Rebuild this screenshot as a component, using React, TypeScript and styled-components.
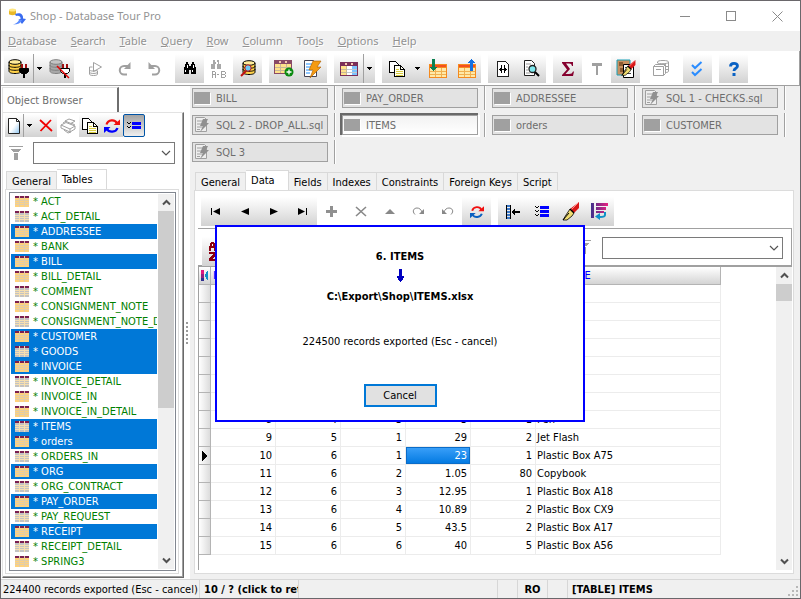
import React from 'react';
import styled, { createGlobalStyle, css } from 'styled-components';

const GlobalStyle = createGlobalStyle`
  *, *::before, *::after { box-sizing: border-box; }
  body { margin: 0; background: #f0f0f0; }
  body, button, input, select, table {
    font-family: "DejaVu Sans Condensed", "Noto Sans", sans-serif;
    font-size: 11px;
    line-height: 15px;
  }
  button { margin: 0; padding: 0; border: 0; background: none; color: inherit; }
  svg { display: block; flex: none; }
`;

/* ---------- window frame ---------- */

const Window = styled.div`
  position: relative;
  display: flex;
  flex-direction: column;
  height: 100vh;
  overflow: hidden;
  border: 1px solid #6a676b;
  background: #f0f0f0;
  color: #000;
`;

const TitleBar = styled.header`
  display: flex;
  align-items: center;
  height: 30px;
  flex: none;
  background: #fff;
  color: #949494;
  padding-left: 8px;
`;

const Title = styled.h1`
  flex: 1;
  margin: 0 0 0 4px;
  font: 400 11px/16px "Noto Sans", "Open Sans", sans-serif;
`;

const WindowButton = styled.button`
  display: grid;
  place-items: center;
  width: 46px;
  height: 28px;
  color: #8a8a8a;
`;

const MenuBar = styled.nav`
  display: flex;
  align-items: center;
  gap: 14px;
  height: 20px;
  flex: none;
  padding-left: 7px;
`;

const MenuItem = styled.button`
  font: 11px/18px "Noto Sans", "Open Sans", sans-serif;
  color: #929292;
  text-shadow: 1px 1px 0 #fff;
`;

const ToolBar = styled.div`
  display: flex;
  gap: 7px;
  height: 35px;
  flex: none;
  padding: 3px 0 0 3px;
  background: #fff;
  border-bottom: 1px solid #a0a0a0;
  border-right: 1px solid #a0a0a0;
`;

const ToolGroup = styled.div`
  display: flex;
  flex: none;
`;

const raised = css`
  background: linear-gradient(#fff, #f2f2f2 30%, #d2d2d2);
`;

const ToolButton = styled.button<{ $flat?: boolean }>`
  display: grid;
  place-items: center;
  width: 29px;
  height: 29px;
  ${p => !p.$flat && raised}
`;

const DropButton = styled.button<{ $line?: boolean }>`
  display: grid;
  place-items: center;
  width: 12px;
  height: 29px;
  border-left: 1px solid ${p => (p.$line ? '#a0a0a0' : 'transparent')};
  ${raised}
`;

const Body = styled.div`
  display: flex;
  flex: 1;
  min-height: 0;
`;

/* ---------- object browser ---------- */

const Side = styled.aside`
  display: flex;
  flex-direction: column;
  width: 183px;
  flex: none;
  padding: 1px 0 1px 1px;
  background: #fff;
`;

const SideCaption = styled.h2`
  margin: 0;
  width: 117px;
  height: 25px;
  padding: 5px 0 0 4px;
  border: 1px solid #e3e3e3;
  border-right: 2px solid #6e6e6e;
  border-bottom: 0;
  font-size: 11px;
  font-weight: 400;
  color: #6d6d6d;
`;

const SidePanel = styled.div`
  display: flex;
  flex-direction: column;
  flex: 1;
  min-height: 0;
  padding: 1px 4px 3px 2px;
  border: 1px solid #e3e3e3;
  border-right-color: #696969;
  border-bottom-color: #696969;
  box-shadow: inset -1px -1px 0 #a0a0a0;
`;

const SideTools = styled.div`
  display: flex;
  height: 23px;
  flex: none;
`;

const SideTool = styled.button<{ $flat?: boolean; $narrow?: boolean; $active?: boolean }>`
  display: grid;
  place-items: center;
  width: ${p => (p.$narrow ? 18 : 22)}px;
  height: 23px;
  ${p => !p.$flat && raised}
  ${p =>
    p.$active &&
    css`
      background: linear-gradient(#a3a3a3, #efefef);
      border: 1px solid #0054a6;
      border-radius: 2px;
    `}
`;

const SideDrop = styled.button`
  display: grid;
  place-items: center;
  width: 12px;
  height: 23px;
  border-left: 1px solid #a0a0a0;
  ${raised}
`;

const SideFilter = styled.div`
  display: flex;
  align-items: center;
  gap: 10px;
  padding: 5px 4px;
`;

const ComboFrame = styled.div<{ $wide?: boolean }>`
  display: grid;
  align-items: center;
  height: 22px;
  ${p => (p.$wide ? 'width: 181px;' : 'flex: 1;')}
  > * { grid-area: 1 / 1; }
  > svg { justify-self: end; margin-right: 4px; pointer-events: none; }
`;

const Combo = styled.select`
  appearance: none;
  width: 100%;
  height: 22px;
  border: 1px solid #7a7a7a;
  border-radius: 0;
  background: #fff;
`;

const TabStrip = styled.div`
  display: flex;
  align-items: flex-end;
  flex: none;
  padding-left: 1px;
`;

const Tab = styled.button<{ $active?: boolean }>`
  height: ${p => (p.$active ? 21 : 18)}px;
  padding: ${p => (p.$active ? '0 13px 2px 5px' : '1px 5px 0')};
  margin-bottom: ${p => (p.$active ? -1 : 0)}px;
  border: 1px solid #d9d9d9;
  border-bottom: 0;
  background: ${p => (p.$active ? '#fff' : '#f0f0f0')};
  white-space: nowrap;
  & + & { border-left: 0; }
`;

const SidePage = styled.div`
  display: flex;
  flex: 1;
  min-height: 0;
  padding: 2px 2px 2px 3px;
  border: 1px solid #dcdcdc;
`;

const ListFrame = styled.div`
  display: flex;
  flex: 1;
  min-width: 0;
  padding: 1px;
  border: 1px solid #828790;
`;

const TableList = styled.ul`
  flex: 1;
  min-width: 0;
  margin: 0;
  padding: 0;
  list-style: none;
  overflow: hidden;
`;

const TableItem = styled.li<{ $selected?: boolean }>`
  display: flex;
  align-items: center;
  height: 15px;
  padding-left: 4px;
  white-space: nowrap;
  color: ${p => (p.$selected ? '#fff' : '#008000')};
  background: ${p => (p.$selected ? '#0078d7' : 'transparent')};
  > span { margin-left: 4px; }
`;

const ScrollTrack = styled.div`
  display: flex;
  flex-direction: column;
  width: 16px;
  flex: none;
  margin-left: 1px;
  background: #f0f0f0;
`;

const ScrollArrow = styled.button`
  display: grid;
  place-items: center;
  height: 17px;
  flex: none;
`;

const ScrollThumb = styled.div<{ $long?: boolean }>`
  ${p => (p.$long ? 'flex: 198;' : 'height: 17px;')}
  background: #cdcdcd;
`;

const ScrollRest = styled.div`
  flex: 144;
`;

const Splitter = styled.div`
  display: flex;
  flex-direction: column;
  align-items: center;
  justify-content: center;
  gap: 2px;
  width: 6px;
  flex: none;
  background: #fff;
`;

const Grip = styled.i`
  width: 2px;
  height: 2px;
  background: #9a9a9a;
`;

/* ---------- documents ---------- */

const Main = styled.main`
  display: flex;
  flex-direction: column;
  flex: 1;
  min-width: 0;
`;

const DocTabs = styled.div`
  display: flex;
  flex-wrap: wrap;
  padding-left: 2px;
`;

const DocSlot = styled.div`
  display: flex;
  width: 150px;
  height: 27px;
  &::after {
    content: '';
    width: 2px;
    height: 24px;
    margin-left: 6px;
    border-left: 1px solid #a0a0a0;
    border-right: 1px solid #fff;
  }
`;

const DocTab = styled.button<{ $active?: boolean }>`
  display: flex;
  align-items: center;
  gap: 3px;
  width: 136px;
  height: 20px;
  margin-top: 2px;
  padding-left: 1px;
  border: 1px solid #a0a0a0;
  background: #e3e3e3;
  color: #6d6d6d;
  white-space: nowrap;
  ${p =>
    p.$active &&
    css`
      background: linear-gradient(#f2f2f2, #fff);
      box-shadow: -1px -1px 0 1px #696969, 1px 1px 0 1px #fff;
    `}
`;

const SheetMark = styled.span`
  width: 19px;
`;

const DocArea = styled.section`
  display: flex;
  flex-direction: column;
  flex: 1;
  min-height: 0;
  padding: 3px 6px 5px 4px;
`;

const DocPage = styled.div`
  display: flex;
  flex-direction: column;
  flex: 1;
  min-height: 0;
  padding: 6px 1px 3px 3px;
  background: #fff;
  border: 1px solid #dcdcdc;
`;

const NavBar = styled.div`
  display: flex;
  gap: 7px;
  height: 32px;
  flex: none;
  padding-left: 3px;
  border-bottom: 1px solid #a0a0a0;
`;

const FilterBar = styled.div`
  display: flex;
  align-items: flex-start;
  gap: 11px;
  height: 38px;
  flex: none;
  padding: 8px 8px 0 4px;
  border-bottom: 2px solid #a0a0a0;
  border-right: 1px solid #a0a0a0;
`;

const FilterIconBox = styled.span`
  margin: 3px 0 0 auto;
`;

const GridFrame = styled.div`
  display: flex;
  justify-content: space-between;
  flex: 1;
  min-height: 0;
  border-left: 1px solid #a0a0a0;
`;

const Grid = styled.table`
  table-layout: fixed;
  width: 522px;
  height: max-content;
  border-collapse: separate;
  border-spacing: 0;
`;

const Col = styled.col<{ $w: number }>`
  width: ${p => p.$w}px;
`;

const HeadCell = styled.th`
  height: 18px;
  padding: 0 2px;
  border-right: 1px solid #b4b4b4;
  border-bottom: 1px solid #b4b4b4;
  background: linear-gradient(#fff, #d4d4d4);
  color: #0000ff;
  font-weight: 400;
  text-align: left;
`;

const RowMark = styled.td`
  height: 18px;
  padding: 0 0 0 3px;
  border-right: 1px solid #b4b4b4;
  border-bottom: 1px solid #b4b4b4;
  background: linear-gradient(90deg, #fff, #dcdcdc);
`;

const Cell = styled.td<{ $num?: boolean; $selected?: boolean }>`
  height: 18px;
  padding: 0 ${p => (p.$num ? 3 : 0)}px 0 1px;
  border-right: 1px solid #ececec;
  border-bottom: 1px solid #ececec;
  text-align: ${p => (p.$num ? 'right' : 'left')};
  white-space: nowrap;
  ${p =>
    p.$selected &&
    css`
      background: linear-gradient(#3ca1fa, #0078e0);
      background-clip: padding-box;
      box-shadow: inset 0 0 0 1px #0a6cc8;
      color: #fff;
    `}
`;

/* ---------- export progress ---------- */

const Overlay = styled.div`
  position: absolute;
  inset: 0;
  display: grid;
  place-items: center;
  padding: 48px 1px 0 0;
`;

const ProgressDialog = styled.div`
  display: flex;
  flex-direction: column;
  align-items: center;
  width: 370px;
  height: 197px;
  padding-top: 22px;
  background: #fff;
  border: 2px solid #0000ff;
  > svg { margin: 4px 0 7px; }
`;

const ProgressTitle = styled.strong`
  line-height: 16px;
`;

const ProgressText = styled.p`
  margin: 29px 0 34px;
  line-height: 16px;
`;

const CancelButton = styled.button`
  width: 73px;
  height: 23px;
  border: 2px solid #0078d7;
  background: #e1e1e1;
`;

/* ---------- status bar ---------- */

const StatusBar = styled.footer`
  display: flex;
  align-items: stretch;
  height: 19px;
  flex: none;
  border-top: 1px solid #d7d7d7;
`;

const StatusCell = styled.div<{ $w?: number; $bold?: boolean; $center?: boolean }>`
  ${p => (p.$w ? `width: ${p.$w}px; flex: none;` : 'flex: 1;')}
  overflow: hidden;
  padding: 2px 0 0 ${p => (p.$center ? 0 : p.$bold ? 4 : 2)}px;
  border-right: 1px solid #d7d7d7;
  font-weight: ${p => (p.$bold ? 700 : 400)};
  text-align: ${p => (p.$center ? 'center' : 'left')};
  white-space: nowrap;
`;

const StatusLast = styled.div`
  display: flex;
  align-items: flex-end;
  justify-content: space-between;
  width: 232px;
  flex: none;
  padding: 0 1px 1px 4px;
  font-weight: 700;
`;

/* ---------- icons ---------- */

type IcoProps = { w?: number; h?: number; soft?: boolean; children: React.ReactNode };
const Ico = ({ w = 20, h = 20, soft, children }: IcoProps) => (
  <svg width={w} height={h} viewBox={`0 0 ${w} ${h}`} fill="none" shapeRendering={soft ? 'auto' : 'crispEdges'} aria-hidden="true">
    {children}
  </svg>
);

const Arrow = () => <Ico w={5} h={3}><path d="M0 0h5v1H0zM1 1h3v1H1zM2 2h1v1H2z" fill="#000" /></Ico>;

const Chevron = () => <Ico w={10} h={6} soft><path d="M1 1l4 4 4-4" stroke="#555" strokeWidth="1.2" /></Ico>;

const ScrollChevron = ({ up }: { up?: boolean }) => (
  <Ico w={9} h={7} soft><path d={up ? 'M1 5.500l3.500-3.500 3.500 3.500' : 'M1 1.500l3.500 3.500 3.500-3.500'} stroke="#505050" strokeWidth="2" /></Ico>
);

const Cylinder = ({ gray }: { gray?: boolean }) => {
  const edge = gray ? '#808080' : '#000';
  const fill = gray ? '#a8a8a8' : '#ffd24a';
  return (
    <>
      <path d="M1 3v9c0 1.500 2 2.500 6 2.500s6-1 6-2.500V3z" fill={fill} />
      <ellipse cx="7" cy="3" rx="6" ry="2.300" fill={gray ? '#c4c4c4' : '#ffec9a'} stroke={edge} />
      <path d="M1 3v9c0 1.500 2 2.500 6 2.500s6-1 6-2.500V3M1 6c0 1.500 2 2.300 6 2.300s6-.8 6-2.300M1 9c0 1.500 2 2.300 6 2.300s6-.8 6-2.300" stroke={edge} />
    </>
  );
};

const Plug = ({ open }: { open?: boolean }) => (
  <>
    <path d="M13 5h2v5h-2zM17 5h2v5h-2z" fill="#a01010" />
    <path d="M11.500 9.500h9v3l-2 2h-5l-2-2z" fill={open ? '#fff' : '#000'} stroke="#000" />
    <path d="M15 15h2v4h-2z" fill="#000" />
  </>
);

const DbConnect = () => <Ico w={22} h={20} soft><Cylinder /><Plug /></Ico>;
const DbDisconnect = () => <Ico w={22} h={20} soft><Cylinder gray /><Plug open /><path d="M8 7l12 12" stroke="#e00000" strokeWidth="1.500" /></Ico>;

const RunStack = () => (
  <Ico w={16} h={16} soft>
    <g stroke="#a0a0a0">
      <path d="M5.500 1.500v9l8-4.500z" fill="#fff" />
      <path d="M1.500 6v7c0 1 1.500 1.500 4 1.500s4-.5 4-1.500v-3M1.500 6h3M1.500 9c1 1 3 1.500 8 .5M1.500 11.500c1 1 5 1.500 8 .2" />
    </g>
  </Ico>
);

const RedoGray = () => <Ico w={14} h={14} soft><path d="M9 12.500H6a4 4 0 010-8.500H10" stroke="#a0a0a0" strokeWidth="2" /><path d="M12.500 0v7H6z" fill="#a0a0a0" /></Ico>;
const UndoGray = () => <Ico w={14} h={14} soft><path d="M5 12.500h3a4 4 0 000-8.500H4" stroke="#a0a0a0" strokeWidth="2" /><path d="M1.500 0v7H8z" fill="#a0a0a0" /></Ico>;

const Find = () => (
  <Ico w={14} h={13}>
    <path d="M3 0h2v2h1v2h2V2h1V0h2v2h1v3h1v7H8V8H6v4H1V5h1V2h1z" fill="#000" />
    <path d="M4 3h1v3H4zM10 3h1v3h-1zM2 8h1v2H2zM9 8h1v2H9z" fill="#fff" />
  </Ico>
);

const Replace = () => (
  <Ico w={16} h={18}>
    <path d="M2 0h2v2h1v2H4v5H0V4h2zM6 0h2v4h2v5H6V4h1V2H6z" fill="#a8a8a8" />
    <path d="M1.500 12v6M1 11.500h3M4.500 12v6M1 14.500h3M6 14.500h2M10.500 11v7M10 11.500h4M10 14.500h4M10 17.500h4M14.500 12v2M14.500 15v2" stroke="#a0a0a0" />
  </Ico>
);

const DbSearch = () => (
  <Ico w={16} h={17} soft>
    <g transform="translate(2 0)"><Cylinder /></g>
    <path d="M6 11l-5 5" stroke="#c01010" strokeWidth="2" />
    <circle cx="8" cy="8" r="3.200" fill="#6cc8f4" stroke="#c01010" />
  </Ico>
);

const SheetGrid = ({ head, body, line, w = 18 }: { head: string; body: string; line: string; w?: number }) => (
  <>
    <path d={`M0 0h${w}v14H0z`} fill={head} />
    <path d={`M1 4h${w - 2}v9H1z`} fill={body} />
    <path d={`M1 7h${w - 2}v1H1zM1 10h${w - 2}v1H1zM6 4h1v9H6zM12 4h1v9h-1z`} fill={line} />
    <path d="M5 1h2v2H5zM11 1h2v2h-2z" fill="#f6c8ae" />
  </>
);

const AddTable = () => (
  <Ico w={20} h={17} soft>
    <SheetGrid head="#8a4a66" body="#ffe28a" line="#c8b898" />
    <circle cx="15" cy="12" r="4.500" fill="#0a8a10" />
    <path d="M15 9.500v5M12.500 12h5" stroke="#fff" strokeWidth="1.300" />
  </Ico>
);

const ScriptRun = () => (
  <Ico w={19} h={20} soft>
    <path d="M1.500 1.500h9l3 3v13h-12z" fill="#fff" stroke="#445" />
    <path d="M3 5h6M3 8h6M3 11h6M3 14h4" stroke="#1e90ff" />
    <path d="M10 2h8l-4 6h4L7 19l3-8H6z" fill="#f49a10" stroke="#a85c00" strokeWidth=".6" />
  </Ico>
);

const TableView = () => (
  <Ico w={18} h={14}>
    <SheetGrid head="#7a2e58" body="#ffe28a" line="#c8b898" />
    <path d="M7 4h5v9H7z" fill="#fff" /><path d="M12 4h5v9h-5z" fill="#7cc4ff" />
    <path d="M7 7h10v1H7zM7 10h10v1H7z" fill="#c0c8d0" />
  </Ico>
);

const CopyPages = () => (
  <Ico w={16} h={16}>
    <path d="M.5.5h6l3 3v8h-9z" fill="#fff" stroke="#000" />
    <path d="M5.500 4.500h6l4 4v7h-10z" fill="#fffff0" stroke="#000" />
    <path d="M11.500 4.500v4h4" stroke="#000" />
    <path d="M7 8h3v1H7zM7 10h7v1H7zM7 12h7v1H7zM7 14h7v1H7z" fill="#d8cc40" />
  </Ico>
);

const ImportTable = ({ out }: { out?: boolean }) => (
  <Ico w={20} h={20}>
    <g transform="translate(1 5)"><SheetGrid head="#f58a1e" body="#ffe9a8" line="#f0b050" /></g>
    <path d="M2 6h16v2H2z" fill="#f4501e" />
    {out ? <path d="M14 0h1v1h1v1h1v1h1v1h-2v8h-3V4h-2V3h1V2h1V1h1z" fill="#1470e0" /> : <path d="M4 0h3v8h2v1H8v1H7v1H6v1H5v-1H4v-1H3V9H2V8h2z" fill="#0a8050" />}
  </Ico>
);

const PageWidth = () => (
  <Ico w={14} h={16}>
    <path d="M1.500.5h8l3 3v12h-11z" fill="#fff" stroke="#222" />
    <path d="M3 8h8v1H3zM5 4h1v8H5zM8 4h1v8H8zM4 7h1v3H4zM9 7h1v3H9z" fill="#000" />
  </Ico>
);

const PageFind = () => (
  <Ico w={18} h={17} soft>
    <path d="M1.500.5h7l3 3v12h-10z" fill="#fff" stroke="#222" />
    <path d="M3 4h5M3 7h2M3 10h2M3 13h4" stroke="#999" />
    <circle cx="9.500" cy="9" r="3.500" fill="#7fe8ee" stroke="#222" strokeWidth="1.300" />
    <path d="M12 12l4 4" stroke="#000" strokeWidth="2" />
  </Ico>
);

const Sigma = () => <Ico w={12} h={14} soft><path d="M0 0h11v4h-1C9.600 2.300 9 1.500 7 1.500H4L8 7l-4.500 5H7c2.500 0 3.200-.8 4-2.500h1L11 14H0v-1l5-5.500L0 1z" fill="#85002e" /></Ico>;
const BigT = () => <Ico w={10} h={12}><path d="M0 0h10v3H6v9H4V3H0z" fill="#a0a0a0" /></Ico>;

const Brush = () => (
  <>
    <path d="M17 0v6l-5 5-4-4z" fill="#d81818" /><path d="M16 1l-7 7" stroke="#ff8a8a" />
    <path d="M8 7l4 4-2 3-5 4H1l3-5z" fill="#f0dc70" stroke="#000" strokeWidth=".8" />
    <path d="M1 18l6-7" stroke="#000" /><path d="M8 7l4 4" stroke="#000" strokeWidth="1.500" />
  </>
);

const PicturePen = () => (
  <Ico w={20} h={20} soft>
    <path d="M1 1h13v15H1z" fill="#c89060" stroke="#18a0b8" />
    <path d="M3 3h4v4H3zM4 9h3v4H4z" fill="#8a5a30" />
    <path d="M7.500 5.500h10v13h-10z" fill="#fff" stroke="#000" />
    <path d="M9 8.500h6M9 11.500h4M9 14.500h6" stroke="#444" />
    <g transform="translate(5 1) scale(.85)"><Brush /></g>
  </Ico>
);

const DbGray = () => (
  <Ico w={17} h={17} soft>
    <g stroke="#a0a0a0">
      <path d="M4.500 3v-1c0-1 2-1.500 5.500-1.500s5.500.5 5.500 1.500v9c0 1-1 1.500-3 1.500M4.500 3c1 1 10 1 11-.5M13 6.500h2.500M13 9.500h2.500" />
      <path d="M.5 6.500l2-2h10v9l-2 2H.5zM.5 6.500h10v9M10.500 6.500l2-2M3 9.500h5" />
    </g>
  </Ico>
);

const Checks = () => <Ico w={13} h={16} soft><path d="M1 4l3 3 6.500-6M1 11l3 3 6.500-6" stroke="#2a8cff" strokeWidth="2" /></Ico>;
const Help = () => <Ico w={10} h={14} soft><path d="M1.500 4.500c0-4 7-4 7-.5 0 2.500-3.500 2-3.500 5" stroke="#0a62c4" strokeWidth="2.800" /><path d="M3.500 11h3v3h-3z" fill="#0a62c4" /></Ico>;

const NewPage = () => (
  <Ico w={12} h={16} soft>
    <defs><linearGradient id="page" x1="0" y1="0" x2="1" y2="1"><stop offset=".5" stopColor="#fff" /><stop offset="1" stopColor="#8cc4f0" /></linearGradient></defs>
    <path d="M.5.500h8l3 3v12h-11z" fill="url(#page)" stroke="#222" /><path d="M8.500.5v3h3" stroke="#222" />
  </Ico>
);
const RedCross = () => <Ico w={14} h={13} soft><path d="M1 1l12 11M12 1L1.500 12" stroke="#f00000" strokeWidth="1.800" /></Ico>;
const Printer = () => (
  <Ico w={17} h={16} soft>
    <g stroke="#a0a0a0" fill="#fff">
      <path d="M5 3l4-2 6 2-4 2.500zM1 7l5-2.500L15 8l-5 3zM1 7v3l9 4v-3M10 14l5-3V8" /><path d="M3 5l3-2M11 5l4 2M4 12l4 3 3-1" fill="none" />
    </g>
  </Ico>
);
const Refresh = ({ w = 16, blue = '#0000ff' }: { w?: number; blue?: string }) => (
  <svg width={w} height={w} viewBox="0 0 16 16" fill="none" aria-hidden="true">
    <path d="M2.500 6.500c1.500-5 8.500-5.500 10.500-1" stroke="#f01010" strokeWidth="2.200" /><path d="M9.500 5.500H16V0z" fill="#f01010" transform="translate(0 1.500)" />
    <path d="M13.500 10c-1.500 4.500-8.500 5-10.500 1" stroke={blue} strokeWidth="2.200" /><path d="M0 9h6.500L0 15z" fill={blue} />
  </svg>
);
const CheckList = ({ rows = 2 }: { rows?: number }) => (
  <Ico w={14} h={rows * 4}>
    {Array.from({ length: rows }, (_, i) => (
      <g key={i} transform={`translate(0 ${i * 4})`}>
        <path d="M0 0h1v1H0zM1 1h2v1H1zM3 0h1v1H3z" fill="#000" /><path d="M5 0h9v3H5z" fill="#0000ff" />
      </g>
    ))}
  </Ico>
);

const Funnel = () => <Ico w={14} h={14}><path d="M0 0h14v1H0zM2 3h10v1h-1v1h-1v1H4V5H3V4H2zM5 7h4v7H5z" fill="#a0a0a0" /></Ico>;

const TableIcon = ({ pale }: { pale?: boolean }) => (
  <Ico w={14} h={11}>
    <path d="M0 2h14v9H0z" fill={pale ? '#c3c3c3' : '#ffd27c'} />
    <path d="M0 4h14v1H0zM0 6h14v1H0zM0 8h14v1H0zM4 0h1v11H4zM9 0h1v11H9z" fill={pale ? '#f6dfb0' : '#e0cdaa'} />
    <path d="M0 0h4v2H0zM5 0h4v2H5zM10 0h4v2h-4z" fill="#7b1f50" />
  </Ico>
);

const SqlGray = () => (
  <Ico w={15} h={16} soft>
    <path d="M1.500.5h9l2 2v12h-11z" fill="#eee" stroke="#a0a0a0" />
    <path d="M3 4h6M3 7h5M3 10h6M3 12.500h3" stroke="#a0a0a0" />
    <path d="M9 2h5l-2 4h3L6 15l3-6H6z" fill="#909090" />
  </Ico>
);
const BlockGray = () => <Ico w={17} h={13}><path d="M1 1h16v12H1z" fill="#fff" /><path d="M0 0h16v12H0z" fill="#a0a0a0" /></Ico>;

const navPaths: Record<string, string> = {
  first: 'M0 0h1v7H0zM9 0v7L2 3.500z',
  prior: 'M9 0v7L1 3.500z',
  next: 'M1 0v7l8-3.500z',
  last: 'M0 0v7l7-3.500zM8 0h1v7H8z',
};

const NavIcon = ({ name }: { name: string }) => <Ico w={10} h={7} soft><path d={navPaths[name]} fill="#000" /></Ico>;
const Plus = () => <Ico w={11} h={11}><path d="M4 0h3v4h4v3H7v4H4V7H0V4h4z" fill="#909090" /></Ico>;
const GrayCross = () => <Ico w={12} h={11} soft><path d="M1 1l10 9M11 1L1 10" stroke="#888" strokeWidth="1.600" /></Ico>;
const GrayUp = () => <Ico w={10} h={5} soft><path d="M5 0l5 5H0z" fill="#888" /></Ico>;
const Curl = ({ left }: { left?: boolean }) => (
  <Ico w={13} h={9} soft>
    <g transform={left ? 'translate(13 0) scale(-1 1)' : undefined}><path d="M3 7.500C-.5 4 2 1 5 1c2.500 0 4 1.500 5 4" stroke="#888" /><path d="M12 2v5H7z" fill="#888" /></g>
  </Ico>
);
const FitLeft = () => (
  <Ico w={14} h={14}>
    <path d="M0 0h1v14H0zM4 0h1v14H4z" fill="#000" />
    <path d="M2.500 0v14" stroke="#3a78c8" strokeWidth="3" strokeDasharray="2 1" />
    <path d="M5 7l4-4v3h5v2H9v3z" fill="#000" />
  </Ico>
);
const SortRows = () => (
  <Ico w={17} h={17} soft>
    <defs><linearGradient id="bars"><stop offset="0" stopColor="#40308c" /><stop offset="1" stopColor="#e82080" /></linearGradient></defs>
    <path d="M0 0h3v15H0zM5 0h12v3H5zM5 4h10v3H5zM5 8h8v2H5z" fill="url(#bars)" />
    <path d="M14 9v3c0 2-3 2-5 2" stroke="#1090c8" strokeWidth="2" /><path d="M9 10v7l-5-3.500z" fill="#1090c8" />
  </Ico>
);
const SortAZ = () => (
  <Ico w={15} h={19}>
    <path d="M2 0h3v1h1v2h1v6H5V6H2v3H0V4h1V1h1zM3 2v2h1V2zM0 10h8v3H7v1H6v1H5v1H4v1h4v2H0v-3h1v-1h1v-1h1v-1h1v-1H0z" fill="#8c0010" />
    <path d="M11 2h2v12h2l-3 4-3-4h2z" fill="#000080" />
  </Ico>
);
const PinColumn = () => (
  <Ico w={8} h={11}>
    <path d="M0 0h3v4H0z" fill="#e01880" /><path d="M0 4h3v4H0z" fill="#902080" /><path d="M0 8h3v3H0z" fill="#303090" />
    <path d="M7 1v9H6V9H5V7H4V4h1V2h1V1z" fill="#1090c8" />
  </Ico>
);
const RowPointer = () => <Ico w={6} h={10}><path d="M0 0v10l6-5z" fill="#000" /></Ico>;
const DownArrow = () => <Ico w={7} h={13}><path d="M2 0h3v7h2v2H6v2H5v1H4v1H3v-1H2v-1H1V9H0V7h2z" fill="#0000c0" /></Ico>;

const AppLogo = () => (
  <Ico w={17} h={17} soft>
    <path d="M0 2v4c0 1.500 7 1.500 7 0V2z" fill="#e8b828" /><ellipse cx="3.500" cy="2" rx="3.500" ry="1.500" fill="#ffe680" />
    <path d="M6 6c5-2 8.500 0 8 4.500L17 11l-4 5-3.500-4.500 2-.5C12 8.500 10 7 7 8z" fill="#3a6cf0" />
    <path d="M13 12c-1 3-4 4.500-9 4.500 3-1 5-2 6-4.500z" fill="#5a8cff" />
  </Ico>
);

const SizeGrip = () => <Ico w={11} h={11}><path d="M8 0h2v2H8zM8 4h2v2H8zM4 4h2v2H4zM8 8h2v2H8zM4 8h2v2H4zM0 8h2v2H0z" fill="#b8b8b8" /></Ico>;

/* ---------- data ---------- */

const menus: [string, string, string][] = [
  ['', 'D', 'atabase'], ['', 'S', 'earch'], ['', 'T', 'able'], ['', 'Q', 'uery'], ['', 'R', 'ow'],
  ['', 'C', 'olumn'], ['Too', 'l', 's'], ['', 'O', 'ptions'], ['', 'H', 'elp'],
];

const tables: { name: string; selected?: boolean; pale?: boolean }[] = [
  { name: 'ACT' }, { name: 'ACT_DETAIL', pale: true }, { name: 'ADDRESSEE', selected: true }, { name: 'BANK' },
  { name: 'BILL', selected: true }, { name: 'BILL_DETAIL' }, { name: 'COMMENT', pale: true }, { name: 'CONSIGNMENT_NOTE' },
  { name: 'CONSIGNMENT_NOTE_DETAIL', pale: true }, { name: 'CUSTOMER', selected: true }, { name: 'GOODS', selected: true, pale: true },
  { name: 'INVOICE', selected: true }, { name: 'INVOICE_DETAIL', pale: true }, { name: 'INVOICE_IN' }, { name: 'INVOICE_IN_DETAIL' },
  { name: 'ITEMS', selected: true, pale: true }, { name: 'orders', selected: true }, { name: 'ORDERS_IN', pale: true },
  { name: 'ORG', selected: true }, { name: 'ORG_CONTRACT', pale: true }, { name: 'PAY_ORDER', selected: true },
  { name: 'PAY_REQUEST', pale: true }, { name: 'RECEIPT', selected: true }, { name: 'RECEIPT_DETAIL', pale: true }, { name: 'SPRING3' },
];

const docs: { name: string; sql?: boolean; active?: boolean }[] = [
  { name: 'BILL' }, { name: 'PAY_ORDER' }, { name: 'ADDRESSEE' }, { name: 'SQL 1 - CHECKS.sql', sql: true },
  { name: 'SQL 2 - DROP_ALL.sql', sql: true }, { name: 'ITEMS', active: true }, { name: 'orders' }, { name: 'CUSTOMER' },
  { name: 'SQL 3', sql: true },
];

const docPages = ['General', 'Data', 'Fields', 'Indexes', 'Constraints', 'Foreign Keys', 'Script'];

const rows: string[][] = [
  ...Array.from({ length: 7 }, () => ['', '', '', '', '', '']),
  ['8', '4', '3', '3', '1', 'Pen'],
  ['9', '5', '1', '29', '2', 'Jet Flash'],
  ['10', '6', '1', '23', '1', 'Plastic Box A75'],
  ['11', '6', '2', '1.05', '80', 'Copybook'],
  ['12', '6', '3', '12.95', '1', 'Plastic Box A18'],
  ['13', '6', '4', '10.89', '2', 'Plastic Box CX9'],
  ['14', '6', '5', '43.5', '2', 'Plastic Box A17'],
  ['15', '6', '6', '40', '5', 'Plastic Box A56'],
];

/* ---------- parts ---------- */

const MainTools = () => (
  <ToolBar role="toolbar" aria-label="Main">
    <ToolGroup>
      <ToolButton aria-label="Connect"><DbConnect /></ToolButton>
      <DropButton $line aria-label="Recent connections"><Arrow /></DropButton>
      <ToolButton aria-label="Disconnect"><DbDisconnect /></ToolButton>
    </ToolGroup>
    <ToolGroup>
      <ToolButton $flat aria-label="Run"><RunStack /></ToolButton>
      <ToolButton $flat aria-label="Redo"><RedoGray /></ToolButton>
      <ToolButton $flat aria-label="Undo"><UndoGray /></ToolButton>
    </ToolGroup>
    <ToolGroup>
      <ToolButton aria-label="Find"><Find /></ToolButton>
      <ToolButton $flat aria-label="Replace"><Replace /></ToolButton>
      <ToolButton aria-label="Search database"><DbSearch /></ToolButton>
    </ToolGroup>
    <ToolGroup>
      <ToolButton aria-label="New table"><AddTable /></ToolButton>
      <ToolButton aria-label="Run script"><ScriptRun /></ToolButton>
    </ToolGroup>
    <ToolGroup>
      <ToolButton aria-label="Open table"><TableView /></ToolButton>
      <DropButton $line aria-label="Table views"><Arrow /></DropButton>
    </ToolGroup>
    <ToolGroup>
      <ToolButton aria-label="Copy"><CopyPages /></ToolButton>
      <DropButton aria-label="Copy options"><Arrow /></DropButton>
      <ToolButton aria-label="Import"><ImportTable /></ToolButton>
      <ToolButton aria-label="Export"><ImportTable out /></ToolButton>
    </ToolGroup>
    <ToolGroup>
      <ToolButton aria-label="Page width"><PageWidth /></ToolButton>
      <ToolButton aria-label="Preview"><PageFind /></ToolButton>
    </ToolGroup>
    <ToolGroup>
      <ToolButton aria-label="Totals"><Sigma /></ToolButton>
      <ToolButton $flat aria-label="Text"><BigT /></ToolButton>
      <ToolButton aria-label="Edit picture"><PicturePen /></ToolButton>
    </ToolGroup>
    <ToolGroup><ToolButton $flat aria-label="Databases"><DbGray /></ToolButton></ToolGroup>
    <ToolGroup><ToolButton aria-label="Options"><Checks /></ToolButton></ToolGroup>
    <ToolGroup><ToolButton aria-label="Help"><Help /></ToolButton></ToolGroup>
  </ToolBar>
);

const ObjectBrowser = () => (
  <Side>
    <SideCaption>Object Browser</SideCaption>
    <SidePanel>
      <SideTools role="toolbar" aria-label="Objects">
        <SideTool $narrow aria-label="New"><NewPage /></SideTool>
        <SideDrop aria-label="New options"><Arrow /></SideDrop>
        <SideTool aria-label="Delete"><RedCross /></SideTool>
        <SideTool $flat aria-label="Print"><Printer /></SideTool>
        <SideTool aria-label="Copy"><CopyPages /></SideTool>
        <SideTool aria-label="Refresh"><Refresh /></SideTool>
        <SideTool $active aria-label="Multiselect"><CheckList /></SideTool>
      </SideTools>
      <SideFilter>
        <Funnel />
        <ComboFrame><Combo aria-label="Filter objects" /><Chevron /></ComboFrame>
      </SideFilter>
      <TabStrip role="tablist">
        <Tab role="tab">General</Tab>
        <Tab role="tab" $active aria-selected="true">Tables</Tab>
      </TabStrip>
      <SidePage>
        <ListFrame>
          <TableList role="listbox" aria-label="Tables" aria-multiselectable="true">
            {tables.map(t => (
              <TableItem key={t.name} role="option" aria-selected={!!t.selected} $selected={t.selected}>
                <TableIcon pale={t.pale} /><span>* {t.name}</span>
              </TableItem>
            ))}
          </TableList>
          <ScrollTrack>
            <ScrollArrow aria-label="Scroll up"><ScrollChevron up /></ScrollArrow>
            <ScrollThumb $long /><ScrollRest />
            <ScrollArrow aria-label="Scroll down"><ScrollChevron /></ScrollArrow>
          </ScrollTrack>
        </ListFrame>
      </SidePage>
    </SidePanel>
  </Side>
);

const DataGrid = () => (
  <GridFrame>
    <Grid>
      <colgroup>
        <Col $w={12} /><Col $w={65} /><Col $w={65} /><Col $w={65} /><Col $w={65} /><Col $w={65} /><Col $w={185} />
      </colgroup>
      <thead>
        <tr>
          <HeadCell aria-label="Row marker"><PinColumn /></HeadCell>
          <HeadCell>ID</HeadCell><HeadCell /><HeadCell /><HeadCell /><HeadCell />
          <HeadCell>ITEMNAME</HeadCell>
        </tr>
      </thead>
      <tbody>
        {rows.map((r, i) => (
          <tr key={i}>
            <RowMark>{i === 9 && <RowPointer />}</RowMark>
            {r.map((v, c) => <Cell key={c} $num={c < 5} $selected={i === 9 && c === 3}>{v}</Cell>)}
          </tr>
        ))}
      </tbody>
    </Grid>
    <ScrollTrack>
      <ScrollArrow aria-label="Scroll up"><ScrollChevron up /></ScrollArrow>
      <ScrollThumb /><ScrollRest />
      <ScrollArrow aria-label="Scroll down"><ScrollChevron /></ScrollArrow>
    </ScrollTrack>
  </GridFrame>
);

const Document = () => (
  <Main>
    <DocTabs>
      {docs.map(d => (
        <DocSlot key={d.name}>
          <DocTab $active={d.active}>
            <SheetMark>{d.sql ? <SqlGray /> : <BlockGray />}</SheetMark>
            <span>{d.name}</span>
          </DocTab>
        </DocSlot>
      ))}
    </DocTabs>
    <DocArea>
      <TabStrip role="tablist">
        {docPages.map(t => <Tab key={t} role="tab" $active={t === 'Data'} aria-selected={t === 'Data'}>{t}</Tab>)}
      </TabStrip>
      <DocPage>
        <NavBar role="toolbar" aria-label="Records">
          <ToolGroup>
            {['first', 'prior', 'next', 'last'].map(n => <ToolButton key={n} aria-label={n}><NavIcon name={n} /></ToolButton>)}
            <ToolButton $flat aria-label="Insert"><Plus /></ToolButton>
            <ToolButton $flat aria-label="Delete"><GrayCross /></ToolButton>
            <ToolButton $flat aria-label="Edit"><GrayUp /></ToolButton>
            <ToolButton $flat aria-label="Post"><Curl /></ToolButton>
            <ToolButton $flat aria-label="Cancel edit"><Curl left /></ToolButton>
            <ToolButton aria-label="Refresh"><Refresh w={14} blue="#0a60c0" /></ToolButton>
          </ToolGroup>
          <ToolGroup>
            <ToolButton aria-label="Fix columns"><FitLeft /></ToolButton>
            <ToolButton aria-label="Choose columns"><CheckList rows={3} /></ToolButton>
            <ToolButton aria-label="Format"><Ico w={18} h={19} soft><Brush /></Ico></ToolButton>
            <ToolButton aria-label="Arrange rows"><SortRows /></ToolButton>
          </ToolGroup>
        </NavBar>
        <FilterBar>
          <ToolButton aria-label="Sort"><SortAZ /></ToolButton>
          <FilterIconBox><Funnel /></FilterIconBox>
          <ComboFrame $wide><Combo aria-label="Filter records" /><Chevron /></ComboFrame>
        </FilterBar>
        <DataGrid />
      </DocPage>
    </DocArea>
  </Main>
);

export default function App() {
  return (
    <Window>
      <GlobalStyle />
      <TitleBar>
        <AppLogo />
        <Title>Shop - Database Tour Pro</Title>
        <WindowButton aria-label="Minimize"><Ico w={10} h={10}><path d="M0 5h10v1H0z" fill="currentColor" /></Ico></WindowButton>
        <WindowButton aria-label="Maximize"><Ico w={10} h={10}><path d="M.5.5h9v9h-9z" stroke="currentColor" /></Ico></WindowButton>
        <WindowButton aria-label="Close"><Ico w={11} h={11} soft><path d="M.5.5l10 10M10.500.5l-10 10" stroke="currentColor" /></Ico></WindowButton>
      </TitleBar>
      <MenuBar>
        {menus.map(([a, k, b]) => <MenuItem key={k + b}>{a}<u>{k}</u>{b}</MenuItem>)}
      </MenuBar>
      <MainTools />
      <Body>
        <ObjectBrowser />
        <Splitter>{Array.from({ length: 6 }, (_, i) => <Grip key={i} />)}</Splitter>
        <Document />
      </Body>
      <StatusBar>
        <StatusCell $w={199}>224400 records exported (Esc - cancel)</StatusCell>
        <StatusCell $w={99} $bold>10 / ? (click to retrieve)</StatusCell>
        <StatusCell />
        <StatusCell $w={20} />
        <StatusCell $w={30} $bold $center>RO</StatusCell>
        <StatusCell $w={20} />
        <StatusLast>[TABLE] ITEMS<SizeGrip /></StatusLast>
      </StatusBar>
      <Overlay>
        <ProgressDialog role="dialog" aria-label="Export progress">
          <ProgressTitle>6. ITEMS</ProgressTitle>
          <DownArrow />
          <ProgressTitle>C:\Export\Shop\ITEMS.xlsx</ProgressTitle>
          <ProgressText>224500 records exported (Esc - cancel)</ProgressText>
          <CancelButton>Cancel</CancelButton>
        </ProgressDialog>
      </Overlay>
    </Window>
  );
}
